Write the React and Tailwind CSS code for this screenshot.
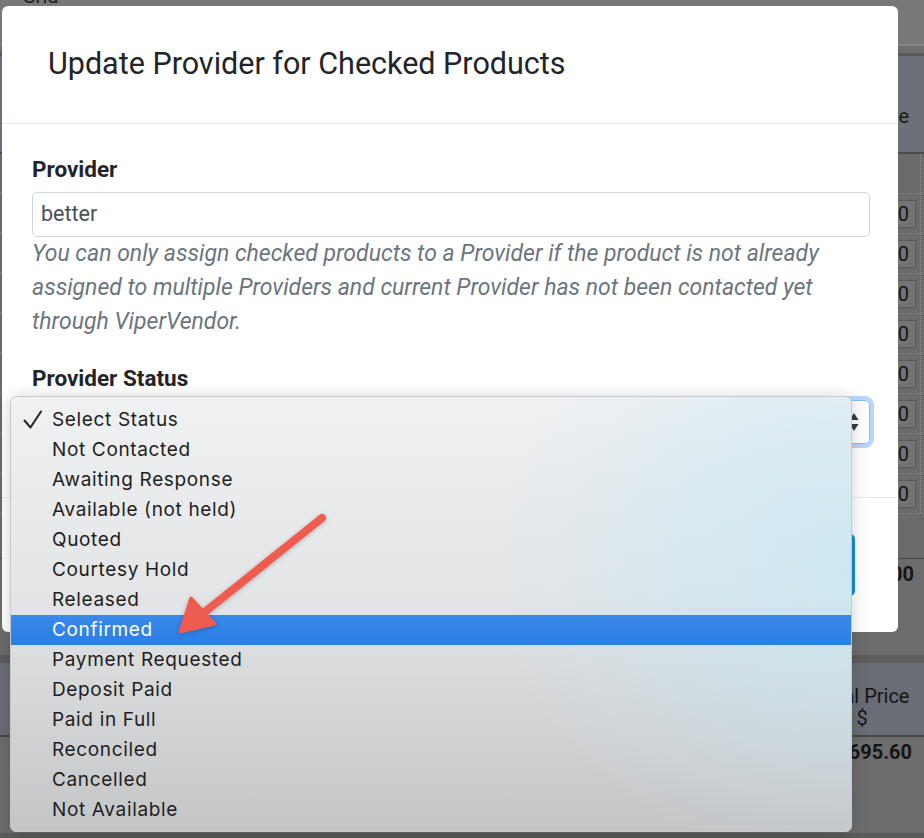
import React from "react";

const items = [
  "Select Status",
  "Not Contacted",
  "Awaiting Response",
  "Available (not held)",
  "Quoted",
  "Courtesy Hold",
  "Released",
  "Confirmed",
  "Payment Requested",
  "Deposit Paid",
  "Paid in Full",
  "Reconciled",
  "Cancelled",
  "Not Available",
];

function BgRow({ box }) {
  return (
    <div className="h-[40px] flex justify-end border-b border-dotted border-[#8a8a8a] bg-[#6a6a6a]">
      <div className="flex items-center">
        {box && (
          <div className="h-[28px] w-[40px] flex items-center justify-end pr-[6px] border border-[#5a5a5a] bg-[#737373] text-[20px] text-[#151515]">
            0
          </div>
        )}
      </div>
      <div className="w-[4px] ml-[4px] border-l border-dotted border-[#8a8a8a]" />
    </div>
  );
}

export default function App() {
  return (
    <div className="relative w-[924px] h-[838px] overflow-hidden bg-[#6e6e6e] font-['Roboto',sans-serif]">
      {/* page under the overlay */}
      <div className="flex flex-col w-full h-full">
        <div className="h-[44px] bg-[#787878] overflow-hidden pl-[22px]">
          <div className="-mt-[14px] text-[20px] text-[#222] leading-[20px]">Grid</div>
        </div>
        <div className="h-[2px] bg-[#858585]" />
        <div className="h-[7px] bg-[#6e6e6e]" />
        <div className="h-[3px] bg-[#595959]" />
        <div className="h-[96px] bg-[#6c7079] flex justify-end pt-[48px] pr-[15px]">
          <div className="text-[20px] leading-[24px] text-[#1b1b1b]">Sale Price</div>
        </div>
        <div className="h-[2px] bg-[#4c4c4c]" />
        <BgRow />
        <BgRow box />
        <BgRow box />
        <BgRow box />
        <BgRow box />
        <BgRow box />
        <BgRow box />
        <BgRow box />
        <BgRow box />
        <div className="h-[44px] bg-[#6a6a6a]" />
        <div className="h-[1px] bg-[#454545]" />
        <div className="h-[96px] bg-[#6c6c6c] flex justify-end pr-[10px] pt-[2px]">
          <div className="text-[20px] font-bold leading-[26px] text-[#151515]">1,280.00</div>
        </div>
        <div className="h-[8px] bg-[#5d5d5d]" />
        <div className="h-[72px] bg-[#6a6d75] flex justify-end">
          <div className="w-[124px] flex flex-col items-center pt-[22px] text-[20px] leading-[22px] text-[#151515]">
            <span>Total Price</span>
            <span>$</span>
          </div>
        </div>
        <div className="h-[2px] bg-[#474747]" />
        <div className="flex-1 bg-[#6d6d6d] flex justify-end pr-[12px] pt-[2px]">
          <div className="text-[20px] font-bold leading-[26px] text-[#151515]">1,695.60</div>
        </div>
        <div className="h-[5px] bg-[#5b5b5b]" />
      </div>

      {/* modal */}
      <div className="absolute left-[2px] top-[6px] w-[896px] h-[626px] bg-white rounded-[6px] flex flex-col overflow-hidden">
        <div className="h-[118px] shrink-0 flex items-center pl-[46px] border-b border-[#e6e9ec]">
          <h5 className="text-[30.5px] leading-[36px] text-[#212529] pb-[2px]">
            Update Provider for Checked Products
          </h5>
        </div>
        <div className="h-[373px] shrink-0 pl-[30px] pr-[28px] pt-[31px]">
          <label className="block text-[22.5px] leading-[28px] font-bold text-[#212529]">Provider</label>
          <div className="mt-[9px] h-[45px] rounded-[5px] border border-[#ced4da] flex items-center pl-[8px] text-[21.5px] text-[#495057]">
            better
          </div>
          <p className="text-[23px] leading-[34px] italic text-[#6c757d]">
            You can only assign checked products to a Provider if the product is not already
            <br />
            assigned to multiple Providers and current Provider has not been contacted yet
            <br />
            through ViperVendor.
          </p>
          <label className="block mt-[25px] text-[22.5px] leading-[28px] font-bold text-[#212529]">
            Provider Status
          </label>
          <div className="relative mt-[8px] h-[44px] rounded-[5px] border border-[#80bdff] ring-4 ring-[#b9d6fa] flex items-center justify-end pr-[10px]">
            <svg width="10" height="20" viewBox="0 0 10 20">
              <path d="M5 1 L9.5 8 L0.5 8 Z" fill="#3a3a3a" />
              <path d="M5 19 L9.5 12 L0.5 12 Z" fill="#3a3a3a" />
            </svg>
          </div>
        </div>
        <div className="flex-1 border-t border-[#e6e9ec] flex items-center justify-end pr-[43px]">
          <button className="w-[150px] h-[62px] rounded-[5px] bg-[#1b8fd4] text-white text-[20px]">
            Update
          </button>
        </div>
      </div>

      {/* native select dropdown */}
      <div className="absolute left-[10px] top-[396px] w-[842px] h-[436px] rounded-[6px] border border-[#c9c9cb] shadow-[0_2px_18px_rgba(0,0,0,0.18)] bg-[image:radial-gradient(ellipse_360px_300px_at_100%_38%,rgba(196,232,246,0.75),rgba(196,232,246,0)_100%),linear-gradient(to_bottom,#f0f1f3,#e4e5e7_45%,#c4c5c7)] pt-[8px] font-['Inter',sans-serif] overflow-hidden">
        {items.map((it, i) => {
          const active = it === "Confirmed";
          return (
            <div
              key={it}
              className={
                active
                  ? "h-[30px] flex items-center bg-[linear-gradient(to_bottom,#3a89ea,#2a7ee6)] text-white"
                  : "h-[30px] flex items-center text-[#1e1e1e]"
              }
            >
              <div className="w-[41px] shrink-0 pl-[12px] flex items-center">
                {i === 0 && (
                  <svg width="20" height="20" viewBox="0 0 20 20">
                    <path d="M1.5 10.5 L7.5 17.5 L18 1.5" fill="none" stroke="#2a2a2a" strokeWidth="2.1" strokeLinecap="round" strokeLinejoin="round" />
                  </svg>
                )}
              </div>
              <span className="text-[19px] tracking-[0.65px] leading-[24px]">{it}</span>
            </div>
          );
        })}
      </div>

      {/* annotation arrow */}
      <svg className="absolute left-0 top-0 pointer-events-none" width="924" height="838" viewBox="0 0 924 838">
        <g style={{ filter: "drop-shadow(0 1px 2px rgba(0,0,0,0.25))" }}>
          <line x1="322" y1="518" x2="206" y2="611" stroke="#f05b50" strokeWidth="8" strokeLinecap="round" />
          <path d="M180 632 L215 624 L191 598 Z" fill="#f05b50" stroke="#f05b50" strokeWidth="3" strokeLinejoin="round" />
        </g>
      </svg>
    </div>
  );
}
